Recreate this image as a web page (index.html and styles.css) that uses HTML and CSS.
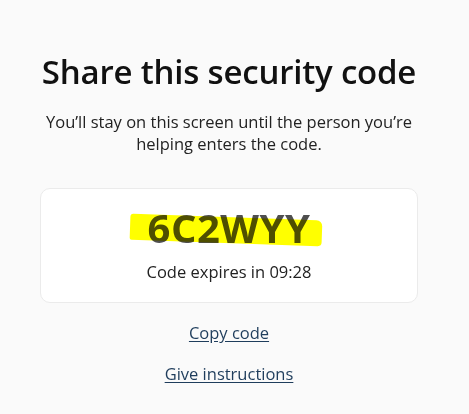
FILE: index.html
```html
<!DOCTYPE html>
<html lang="en">
<head>
    <meta charset="UTF-8">
    <meta name="viewport" content="width=device-width, initial-scale=1.0">
    <title>Share this security code</title>
    <link rel="stylesheet" href="styles.css">
</head>
<body>
    <main class="panel">
        <h1>Share this security code</h1>
        <p class="intro">You’ll stay on this screen until the person you’re<br>helping enters the code.</p>

        <div class="code-card">
            <div class="code-wrap">
                <span class="code">6C2WYY</span>
                <span class="marker"></span>
            </div>
            <div class="expires">Code expires in 09:28</div>
        </div>

        <div class="links">
            <a href="#">Copy code</a>
            <a href="#">Give instructions</a>
        </div>
    </main>
</body>
</html>
```

FILE: styles.css
```css
body {
    margin: 0;
    padding-right: 11px;
    background-color: #fafafa;
    font-family: "Open Sans", "Noto Sans", Arial, sans-serif;
    color: #1b1b1b;
}
.panel {
    width: 378px;
    margin: 0 auto;
    padding-top: 52px;
    display: flex;
    flex-direction: column;
    align-items: center;
}
h1 {
    margin: 0;
    font-size: 33px;
    font-weight: 600;
    line-height: 40px;
    letter-spacing: -0.2px;
    color: #111;
    white-space: nowrap;
}
.intro {
    margin: 19px 0 0;
    font-size: 16.5px;
    line-height: 22px;
    text-align: center;
    color: #222;
    white-space: nowrap;
}
.code-card {
    align-self: stretch;
    margin-top: 33px;
    height: 115px;
    box-sizing: border-box;
    background-color: #fff;
    border: 1px solid #ebebeb;
    border-radius: 10px;
    display: flex;
    flex-direction: column;
    align-items: center;
}
.code-wrap {
    position: relative;
    margin-top: 15px;
}
.code {
    display: block;
    font-size: 40px;
    font-weight: 700;
    line-height: 48px;
    color: #4f4f4f;
    letter-spacing: 0.5px;
}
.marker {
    position: absolute;
    left: -18px;
    right: -11px;
    top: 13px;
    height: 26px;
    background-color: #ffff00;
    mix-blend-mode: multiply;
    transform: rotate(2deg);
    border-radius: 3px 6px 4px 2px;
}
.expires {
    margin-top: 9px;
    font-size: 16.5px;
    line-height: 22px;
    color: #222;
}
.links {
    margin-top: 19px;
    display: flex;
    flex-direction: column;
    align-items: center;
    gap: 19px;
}
.links a {
    font-size: 16.5px;
    line-height: 22px;
    color: #1f3d5c;
    text-decoration: underline;
    text-underline-offset: 2px;
}
```
